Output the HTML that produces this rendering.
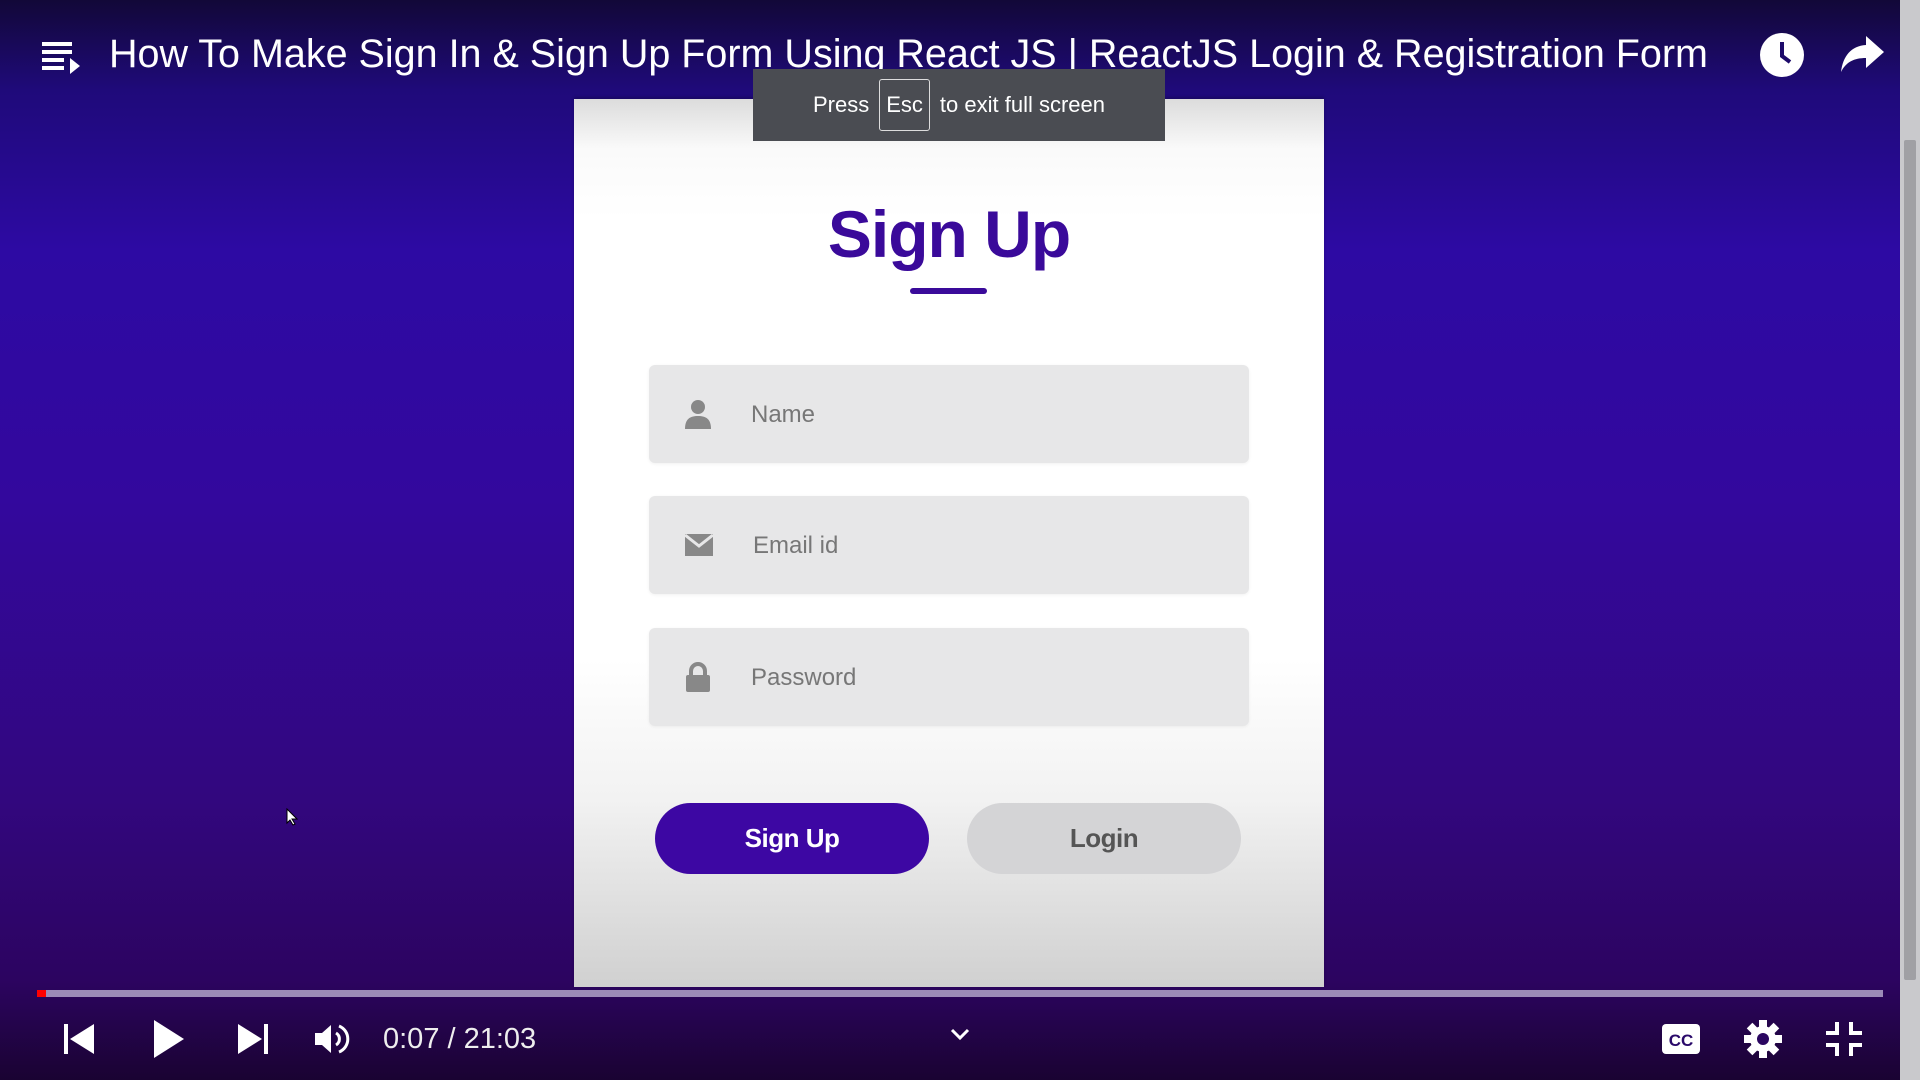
<!DOCTYPE html>
<html><head><meta charset="utf-8"><style>
*{margin:0;padding:0;box-sizing:border-box}
body{width:1920px;height:1080px;overflow:hidden;position:relative;font-family:"Liberation Sans",sans-serif;
background:linear-gradient(180deg,#120838 0px,#1f0a7a 90px,#2d0aa3 250px,#33089d 500px,#32077e 800px,#2c0460 980px,#1a0332 1080px);}
.abs{position:absolute}
.card{left:574px;top:99px;width:750px;height:888px;background:linear-gradient(180deg,#dcdcdc 0,#fafafa 50px,#fff 120px,#fff 560px,#f2f2f2 700px,#d0d0d0 888px);box-shadow:0 -2px 3px rgba(0,0,0,.2)}
.title{left:109px;top:32px;color:#fff;font-size:39.5px;white-space:nowrap}
.tip{left:753px;top:69px;width:412px;height:72px;background:#4a4c52;color:#fff;font-size:22px;display:flex;align-items:center;justify-content:center;gap:10px}
.tip span.k{border:1px solid #ddd;border-radius:3px;padding:12px 6px}
.h{left:574px;width:750px;top:196px;text-align:center;color:#3a0a9a;font-size:66px;font-weight:bold;font-family:"Liberation Sans",sans-serif;letter-spacing:-1px}
.ul{left:910px;top:288px;width:77px;height:6px;border-radius:3px;background:#3a0a9a}
.inp{left:649px;width:600px;height:98px;background:#e7e7e8;border-radius:6px;box-shadow:0 1px 3px rgba(0,0,0,.06)}
.inp .t{position:absolute;left:102px;top:36px;font-size:24px;color:#777}
.inp svg{position:absolute;left:36px;top:34px}
.btn{top:803px;width:274px;height:71px;border-radius:36px;display:flex;align-items:center;justify-content:center;font-size:26px;font-weight:bold;font-family:"Liberation Sans",sans-serif;letter-spacing:-0.5px}
.bar{left:37px;top:990px;width:1846px;height:7px;background:#9c8bb8}
.time{left:383px;top:1023px;color:#eee;font-size:29px}
.sb{left:1900px;top:0;width:20px;height:1080px;background:#c9c9cc}
</style></head><body>
<div class="abs sb"><div style="position:absolute;left:4px;top:140px;width:12px;height:840px;background:#a0a0a4;border-radius:2px"></div></div>
<svg class="abs" style="left:42px;top:40px" width="40" height="38" viewBox="0 0 40 38" fill="#fff"><rect x="0" y="2" width="30" height="4"/><rect x="0" y="10" width="30" height="4"/><rect x="0" y="18" width="22" height="4"/><rect x="0" y="26" width="22" height="4"/><path d="M28 18 L38 26 L28 34Z"/></svg>
<div class="abs title">How To Make Sign In &amp; Sign Up Form Using React JS | ReactJS Login &amp; Registration Form</div>
<svg class="abs" style="left:1759px;top:32px" width="46" height="46" viewBox="0 0 46 46"><circle cx="23" cy="23" r="22" fill="#fff"/><path d="M23 10 V24 L31 30" stroke="#1d0a6a" stroke-width="4" fill="none"/></svg>
<svg class="abs" style="left:1840px;top:34px" width="46" height="40" viewBox="0 0 46 40"><path d="M26 2 L44 18 L26 34 V24 C14 24 6 28 1 38 C3 22 11 12 26 11Z" fill="#fff"/></svg>
<div class="abs card"></div>
<div class="abs tip"><span>Press</span><span class="k">Esc</span><span>to exit full screen</span></div>
<div class="abs h">Sign Up</div>
<div class="abs ul"></div>
<div class="abs inp" style="top:365px"><svg width="26" height="30" viewBox="0 0 26 30" fill="#888"><circle cx="13" cy="8" r="7"/><path d="M0 30 C0 20 5 17 13 17 C21 17 26 20 26 30Z"/></svg><div class="t">Name</div></div>
<div class="abs inp" style="top:496px"><svg width="28" height="22" viewBox="0 0 28 22" style="top:38px"><rect width="28" height="22" fill="#888"/><path d="M0 1 L14 12 L28 1" stroke="#e7e7e8" stroke-width="3" fill="none"/></svg><div class="t" style="left:104px">Email id</div></div>
<div class="abs inp" style="top:628px"><svg width="26" height="30" viewBox="0 0 26 30" fill="#888"><path d="M6 13 V9 A7 7 0 0 1 20 9 V13" stroke="#888" stroke-width="4" fill="none"/><rect x="1" y="13" width="24" height="17" rx="2"/></svg><div class="t">Password</div></div>
<div class="abs btn" style="left:655px;background:#3d07a3;color:#fff">Sign Up</div>
<div class="abs btn" style="left:967px;background:#d4d4d6;color:#555">Login</div>
<div class="abs bar"></div><div class="abs" style="left:37px;top:990px;width:9px;height:7px;background:#f00"></div>
<svg class="abs" style="left:64px;top:1024px" width="32" height="30" viewBox="0 0 32 30" fill="#fff"><rect x="0" y="0" width="4" height="30"/><path d="M30 0 V30 L6 15Z"/></svg>
<svg class="abs" style="left:152px;top:1020px" width="34" height="38" viewBox="0 0 34 38" fill="#fff"><path d="M2 0 L32 19 L2 38Z"/></svg>
<svg class="abs" style="left:238px;top:1024px" width="32" height="30" viewBox="0 0 32 30" fill="#fff"><path d="M0 0 L24 15 L0 30Z"/><rect x="26" y="0" width="4" height="30"/></svg>
<svg class="abs" style="left:315px;top:1022px" width="36" height="34" viewBox="0 0 36 34" fill="#fff"><path d="M0 11 H7 L16 3 V31 L7 23 H0Z"/><path d="M21 11 A7 7 0 0 1 21 23" stroke="#fff" stroke-width="3" fill="none"/><path d="M24 4 A14 14 0 0 1 24 30" stroke="#fff" stroke-width="3" fill="none"/></svg>
<div class="abs time">0:07 / 21:03</div>
<svg class="abs" style="left:950px;top:1028px" width="20" height="14" viewBox="0 0 20 14"><path d="M2 2 L10 10 L18 2" stroke="#fff" stroke-width="3" fill="none"/></svg>
<svg class="abs" style="left:1662px;top:1024px" width="38" height="30" viewBox="0 0 38 30"><rect width="38" height="30" rx="4" fill="#fff"/><text x="19" y="22" font-family="Liberation Sans" font-weight="bold" font-size="17" fill="#2a0a6a" text-anchor="middle">CC</text></svg>
<svg class="abs" style="left:1744px;top:1020px" width="38" height="38" viewBox="0 0 38 38"><g fill="#fff"><circle cx="19" cy="19" r="13"/><rect x="15" y="0" width="8" height="38"/><rect x="0" y="15" width="38" height="8"/><rect x="15" y="0" width="8" height="38" transform="rotate(45 19 19)"/><rect x="15" y="0" width="8" height="38" transform="rotate(-45 19 19)"/></g><circle cx="19" cy="19" r="6" fill="#2a0660"/></svg>
<svg class="abs" style="left:1826px;top:1022px" width="36" height="34" viewBox="0 0 36 34" fill="#fff"><path d="M9 0 H13 V13 H0 V9 H9Z"/><path d="M23 0 H27 V9 H36 V13 H23Z"/><path d="M0 21 H13 V34 H9 V25 H0Z"/><path d="M23 21 H36 V25 H27 V34 H23Z"/></svg>
<svg class="abs" style="left:286px;top:808px" width="12" height="18" viewBox="0 0 12 18"><path d="M1 1 V15 L4 12 L7 17 L9 16 L6 11 H11Z" fill="#fff" stroke="#000" stroke-width="1"/></svg>
</body></html>
